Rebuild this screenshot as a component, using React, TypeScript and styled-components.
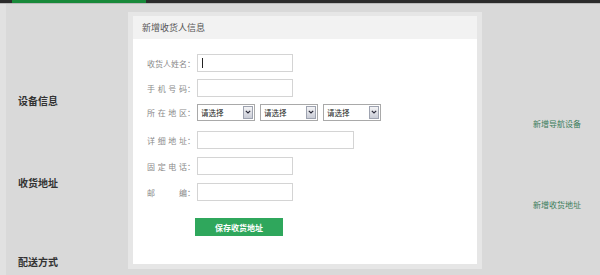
import React from 'react';
import styled, { createGlobalStyle } from 'styled-components';

const GlobalStyle = createGlobalStyle`
  html, body {
    margin: 0;
    padding: 0;
  }
  body {
    width: 600px;
    height: 275px;
    overflow: hidden;
    background: #d9d9d9;
    font-family: "Noto Sans CJK SC", "Noto Sans", sans-serif;
  }
`;

const TopBar = styled.div`
  height: 3px;
  padding-left: 12px;
  background: #2b2b2b;
  border-bottom: 1px solid #b9b9b9;
`;

const TopActive = styled.div`
  width: 134px;
  height: 3px;
  background: #18893a;
`;

const Main = styled.div`
  display: grid;
  grid-template-columns: 122px 354px 1fr;
  height: 271px;
  border-left: 6px solid #e1e1e1;
`;

const SideNav = styled.div`
  display: flex;
  flex-direction: column;
  padding: 91px 0 0 12px;
`;

const SectionTitle = styled.div<{ $top?: number }>`
  margin-top: ${({ $top }) => $top ?? 0}px;
  font-size: 10px;
  line-height: 12px;
  font-weight: 700;
  color: #333;
`;

const Center = styled.div`
  padding-top: 8px;
`;

const Frame = styled.div`
  height: 257px;
  box-sizing: border-box;
  border: 5px solid #e6e6e6;
  border-top-width: 4px;
  background: #fff;
`;

const PanelHeader = styled.div`
  height: 23px;
  padding-left: 9px;
  display: flex;
  align-items: center;
  background: #f2f2f2;
  font-size: 9px;
  color: #555;
`;

const Form = styled.div`
  display: flex;
  flex-direction: column;
  padding: 15px 0 0 14px;
`;

const Row = styled.div<{ $top?: number }>`
  display: flex;
  align-items: center;
  height: 18px;
  margin-top: ${({ $top }) => $top ?? 0}px;
`;

const Label = styled.span`
  width: 40px;
  font-size: 8px;
  color: #8a8a8a;
  text-align: justify;
  text-align-last: justify;
`;

const Colon = styled.span`
  width: 10px;
  font-size: 8px;
  color: #8a8a8a;
`;

const Field = styled.div<{ $w: number; $caret?: boolean }>`
  position: relative;
  width: ${({ $w }) => $w}px;
  height: 18px;
  box-sizing: border-box;
  border: 1px solid #d4d4d4;
  background: #fff;

  &::before {
    content: '';
    display: ${({ $caret }) => ($caret ? 'block' : 'none')};
    position: absolute;
    left: 4px;
    top: 3px;
    width: 1px;
    height: 10px;
    background: #222;
  }
`;

const Selects = styled.div`
  display: flex;
  gap: 5px;
`;

const SelectBox = styled.div`
  width: 58px;
  height: 17px;
  box-sizing: border-box;
  border: 1px solid #a9a9a9;
  display: flex;
  align-items: center;
  justify-content: space-between;
  background: #fff;
  font-size: 7.5px;
  color: #222;
  padding: 1px 1px 1px 3px;
`;

const SelectArrow = styled.span`
  width: 10px;
  height: 13px;
  box-sizing: border-box;
  border: 1px solid #9ea3b0;
  background: linear-gradient(#f4f4f6, #c9ccd6);
  display: flex;
  align-items: center;
  justify-content: center;
`;

const SaveButton = styled.button`
  margin: 17px 0 0 48px;
  width: 88px;
  height: 18px;
  border: none;
  padding: 0;
  background: #2fa75c;
  color: #fff;
  font-family: "Noto Sans CJK SC", serif;
  font-size: 8px;
  font-weight: 700;
`;

const SideLinks = styled.div`
  display: flex;
  flex-direction: column;
  padding: 115px 0 0 51px;
`;

const SideLink = styled.div<{ $top?: number }>`
  margin-top: ${({ $top }) => $top ?? 0}px;
  font-size: 8px;
  line-height: 10px;
  color: #3b7d5c;
`;

const Chevron = () => (
  <svg width="6" height="4" viewBox="0 0 6 4">
    <path d="M0.8 0.8 L3 3 L5.2 0.8" fill="none" stroke="#2a2a3a" strokeWidth="1.2" />
  </svg>
);

const Select = () => (
  <SelectBox>
    请选择
    <SelectArrow>
      <Chevron />
    </SelectArrow>
  </SelectBox>
);

const FormLabel: React.FC<{ text: string }> = ({ text }) => (
  <>
    <Label>{text}</Label>
    <Colon>：</Colon>
  </>
);

export default function App() {
  return (
    <>
      <GlobalStyle />
      <TopBar>
        <TopActive />
      </TopBar>
      <Main>
        <SideNav>
          <SectionTitle>设备信息</SectionTitle>
          <SectionTitle $top={70}>收货地址</SectionTitle>
          <SectionTitle $top={67}>配送方式</SectionTitle>
        </SideNav>
        <Center>
          <Frame>
            <PanelHeader>新增收货人信息</PanelHeader>
            <Form>
              <Row>
                <FormLabel text="收货人姓名" />
                <Field $w={96} $caret />
              </Row>
              <Row $top={7}>
                <FormLabel text="手机号码" />
                <Field $w={96} />
              </Row>
              <Row $top={6}>
                <FormLabel text="所在地区" />
                <Selects>
                  <Select />
                  <Select />
                  <Select />
                </Selects>
              </Row>
              <Row $top={10}>
                <FormLabel text="详细地址" />
                <Field $w={157} />
              </Row>
              <Row $top={8}>
                <FormLabel text="固定电话" />
                <Field $w={96} />
              </Row>
              <Row $top={8}>
                <FormLabel text="邮编" />
                <Field $w={96} />
              </Row>
              <SaveButton>保存收货地址</SaveButton>
            </Form>
          </Frame>
        </Center>
        <SideLinks>
          <SideLink>新增导航设备</SideLink>
          <SideLink $top={71}>新增收货地址</SideLink>
        </SideLinks>
      </Main>
    </>
  );
}
